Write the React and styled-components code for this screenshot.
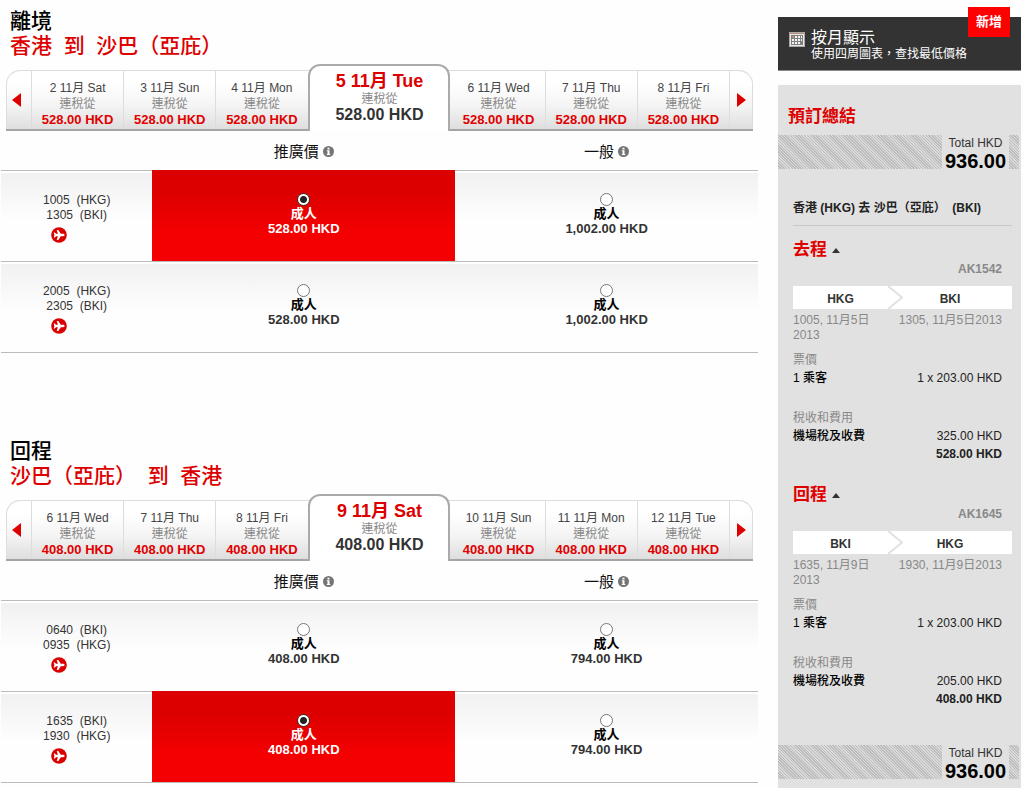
import React, { useState } from "react";
import styled, { createGlobalStyle, css } from "styled-components";

const GlobalStyle = createGlobalStyle`
  *, *::before, *::after { box-sizing: border-box; }
  body {
    margin: 0;
    background: #fefefe;
    color: #333;
    font: 12px/15px "Liberation Sans", "Noto Sans CJK TC", sans-serif;
  }
  h1, h2, h3, p, ul, dl, dd, dt { margin: 0; padding: 0; font-weight: normal; }
  button { font: inherit; color: inherit; background: none; border: 0; padding: 0; cursor: pointer; }
`;

const Page = styled.div`
  display: grid;
  grid-template-columns: minmax(0, 1fr) 243px;
  gap: 20px;
  min-height: 100vh;
  padding: 0 3px 0 1px;
`;

const Trip = styled.section`
  padding-top: 8px;
  & + & { margin-top: 77px; }
`;

const TripTitle = styled.h2`
  padding-left: 9px;
  font-size: 21px;
  line-height: 25px;
  font-weight: 500;
  color: #000;
`;

const TripRoute = styled.p`
  padding-left: 9px;
  font-size: 21px;
  line-height: 25px;
  font-weight: 500;
  color: #d00;
  white-space: pre-wrap;
`;

const DateStrip = styled.div`
  display: grid;
  grid-template-columns: 25px repeat(3, 1fr) 145px repeat(3, 1fr) 24px;
  height: 61px;
  margin: 12px 5px 0;
  border: 1px solid #ddd;
  border-width: 1px 0 2px;
  border-bottom-color: #a5a5a5;
  border-radius: 14px 14px 0 0;
  background: linear-gradient(#fff 20%, #f4f4f4 60%, #dedede);
  box-shadow: inset 1px 0 #ddd, inset -1px 0 #ddd;
`;

const Arrow = styled.button`
  display: grid;
  place-items: center;
  ${(p) => (p.$dir === "left" ? "padding-right: 4px;" : "border-left: 1px solid #ddd;")}
  & svg { display: block; }
`;

const DateTab = styled.button`
  display: flex;
  flex-direction: column;
  align-items: center;
  white-space: nowrap;
  ${(p) =>
    p.$active
      ? css`
          margin: -7px 2px -2px 1px;
          padding-top: 6px;
          background: #fff;
          border: 2px solid #aaa;
          border-bottom: 0;
          border-radius: 12px 12px 0 0;
        `
      : css`
          padding-top: 9px;
          border-left: ${p.$first ? 0 : 1}px solid #ddd;
        `}
`;

const TabDate = styled.span`
  font-size: ${(p) => (p.$active ? 18 : 12)}px;
  line-height: ${(p) => (p.$active ? 19 : 16)}px;
  font-weight: ${(p) => (p.$active ? 700 : 400)};
  color: ${(p) => (p.$active ? "#d00" : "#444")};
`;

const TabNote = styled.span`
  line-height: 16px;
  color: #888;
`;

const TabPrice = styled.strong`
  font-size: ${(p) => (p.$active ? 16 : 13)}px;
  line-height: 16px;
  color: ${(p) => (p.$active ? "#333" : "#e00000")};
`;

const FareTable = styled.table`
  width: 100%;
  table-layout: fixed;
  border-collapse: separate;
  border-spacing: 0;
  border-bottom: 1px solid #bbb;
`;

const HeadCell = styled.th`
  width: ${(p) => (p.$times ? "20%" : "40%")};
  height: 39px;
  padding: 2px 0 0;
  font-size: 15px;
  line-height: 20px;
  font-weight: 400;
  color: #111;
`;

const InfoButton = styled.button`
  margin-left: 4px;
  vertical-align: middle;
  line-height: 0;
  padding-bottom: 3px;
`;

const Cell = styled.td`
  height: 91px;
  padding: 22px 0 0;
  vertical-align: top;
  text-align: center;
  border-top: 1px solid ${(p) => (p.$selected ? "#dd0000" : "#bbb")};
  background: ${(p) =>
    p.$selected
      ? "linear-gradient(#dd0000 25%, #f40000 70%)"
      : "linear-gradient(#fff 2px, #f1f1f1 2px, #fefefe 55%)"};
  color: ${(p) => (p.$selected ? "#fff" : "#333")};
`;

const FlightTime = styled.p`
  white-space: pre-wrap;
`;

const PlaneBadge = styled.span`
  display: block;
  padding: 4px 36px 0 0;
  line-height: 0;
`;

const FareChoice = styled.label`
  display: flex;
  flex-direction: column;
  align-items: center;
  cursor: pointer;
`;

const Radio = styled.input`
  appearance: none;
  width: 13px;
  height: 13px;
  margin: 0;
  border: 1px solid #777;
  border-radius: 50%;
  background: #fff;
  &:checked {
    border-color: #333;
    background: radial-gradient(circle, #222 0 3px, #fff 4px);
  }
`;

const FareKind = styled.strong`
  font-size: 13px;
  color: ${(p) => (p.$selected ? "#fff" : "#000")};
`;

const FarePrice = styled.strong`
  font-size: 13px;
`;

const Sidebar = styled.aside`
  display: flex;
  flex-direction: column;
  padding-top: 17px;
`;

const MonthBanner = styled.a`
  position: relative;
  display: flex;
  gap: 6px;
  height: 54px;
  padding: 12px 11px 0;
  border-bottom: 1px solid #888;
  background: #333;
  color: #fff;
  text-decoration: none;
  & svg { flex: none; margin-top: 3px; }
`;

const BannerTitle = styled.span`
  display: block;
  font-size: 16px;
  line-height: 18px;
`;

const BannerNote = styled.span`
  display: block;
  line-height: 15px;
`;

const NewTag = styled.strong`
  position: absolute;
  top: -10px;
  right: 11px;
  width: 42px;
  font-size: 13px;
  line-height: 30px;
  text-align: center;
  background: #f00;
`;

const Summary = styled.section`
  flex: 1;
  margin-top: 14px;
  padding: 22px 0 9px;
  background: #e1e1e1;
`;

const SummaryTitle = styled.h2`
  padding: 0 10px;
  margin-bottom: 8px;
  font-size: 17px;
  line-height: 20px;
  font-weight: 700;
  color: #d00;
`;

const TotalBand = styled.div`
  display: flex;
  justify-content: flex-end;
  height: 34px;
  margin-right: 2px;
  padding-right: 10px;
  background: repeating-linear-gradient(45deg, #bcbcbc 0 1px, #dadada 1px 2px);
`;

const TotalBox = styled.p`
  width: 67px;
  background: #e1e1e1;
  text-align: center;
  line-height: 16px;
`;

const TotalValue = styled.strong`
  display: block;
  font-size: 20px;
  line-height: 21px;
  color: #000;
`;

const SummaryBody = styled.div`
  margin: 30px 9px 15px 15px;
`;

const RouteLine = styled.h3`
  padding-bottom: 8px;
  margin-bottom: 14px;
  border-bottom: 1px solid #c8c8c8;
  font-size: 12px;
  font-weight: 700;
  line-height: 18px;
  color: #222;
  white-space: pre;
`;

const Leg = styled.section`
  padding-bottom: 22px;
`;

const LegToggle = styled.button`
  display: flex;
  align-items: center;
  gap: 5px;
  font-size: 17px;
  line-height: 20px;
  font-weight: 700;
  color: #e00000;
`;

const FlightNo = styled.p`
  padding-right: 10px;
  margin-bottom: 8px;
  text-align: right;
  line-height: 18px;
  font-weight: 700;
  color: #888;
`;

const LegPath = styled.div`
  display: grid;
  grid-template-columns: 95px 16px 1fr;
  height: 23px;
  background: #fff;
  font-weight: 700;
  line-height: 26px;
  text-align: center;
  & svg { display: block; }
  & span:last-child { padding-right: 16px; }
`;

const LegTimes = styled.div`
  display: grid;
  grid-template-columns: 95px 1fr;
  margin: 4px 0 8px;
  padding-right: 10px;
  color: #888;
  & span:last-child { text-align: right; white-space: nowrap; }
`;

const Charges = styled.dl`
  padding-right: 10px;
  line-height: 18px;
  & + & { margin-top: 22px; }
`;

const ChargeHead = styled.dt`
  color: #888;
`;

const ChargeRow = styled.dd`
  display: flex;
  justify-content: ${(p) => (p.$sum ? "flex-end" : "space-between")};
  font-weight: ${(p) => (p.$sum ? 700 : 400)};
  color: #222;
`;

const ChargeName = styled.span`
  font-weight: 500;
  color: #000;
`;

function InfoIcon() {
  return (
    <svg width="11" height="11" viewBox="0 0 11 11" aria-hidden="true">
      <circle cx="5.5" cy="5.5" r="5.5" fill="#747474" />
      <path d="M4.5 1.8h2v1.6h-2zM3.8 4.3h2.700v3.600h.8v1H3.800v-1h.7V5.300h-.7z" fill="#fff" />
    </svg>
  );
}

function PlaneIcon() {
  return (
    <svg width="16" height="16" viewBox="0 0 16 16" aria-hidden="true">
      <circle cx="8" cy="8" r="7.8" fill="#d90000" />
      <path
        d="M13.600 8c0-.8-.8-1.200-1.800-1.200H9.800L7.300 3H5.700l1.200 3.800H4.900L3.900 5.400H2.700L3.400 8l-.7 2.600h1.200l1-1.400h2L5.700 13h1.600l2.500-3.800h2c1 0 1.800-.4 1.800-1.200z"
        fill="#fff"
      />
    </svg>
  );
}

function CalendarIcon() {
  return (
    <svg width="16" height="15" viewBox="0 0 16 15" aria-hidden="true">
      <rect x=".5" y=".5" width="15" height="14" fill="#e8e8e8" stroke="#aaa" />
      <path d="M1 1.500h14" stroke="#b98a70" />
      <path d="M2 3h12v10H2z" fill="#808080" />
      <path
        d="M6 4h2v2H6zM9 4h2v2H9zM12 4h1v2h-1zM3 7h2v2H3zM6 7h2v2H6zM9 7h2v2H9zM12 7h1v2h-1zM3 10h2v2H3zM6 10h2v2H6zM9 10h2v2H9z"
        fill="#f4f4f4"
      />
      <path d="M3 4h2v2H3z" fill="#b98a70" />
    </svg>
  );
}

function Triangle({ dir }) {
  return (
    <svg width="9" height="14" viewBox="0 0 9 14" aria-hidden="true">
      <path d={dir === "left" ? "M9 0v14L0 7z" : "M0 0v14l9-7z"} fill="#d00" />
    </svg>
  );
}

const trips = [
  {
    id: "out",
    title: "離境",
    route: "香港  到  沙巴（亞庇）",
    price: "528.00",
    days: ["2 11月 Sat", "3 11月 Sun", "4 11月 Mon", "5 11月 Tue", "6 11月 Wed", "7 11月 Thu", "8 11月 Fri"],
    flights: [
      { times: ["1005  (HKG)", "1305  (BKI)"], fares: ["528.00", "1,002.00"] },
      { times: ["2005  (HKG)", "2305  (BKI)"], fares: ["528.00", "1,002.00"] },
    ],
    initial: "0-0",
  },
  {
    id: "back",
    title: "回程",
    route: "沙巴（亞庇）  到  香港",
    price: "408.00",
    days: ["6 11月 Wed", "7 11月 Thu", "8 11月 Fri", "9 11月 Sat", "10 11月 Sun", "11 11月 Mon", "12 11月 Tue"],
    flights: [
      { times: ["0640  (BKI)", "0935  (HKG)"], fares: ["408.00", "794.00"] },
      { times: ["1635  (BKI)", "1930  (HKG)"], fares: ["408.00", "794.00"] },
    ],
    initial: "1-0",
  },
];

const legs = [
  { title: "去程", no: "AK1542", from: "HKG", to: "BKI", dep: "1005, 11月5日2013", arr: "1305, 11月5日2013", tax: "325.00", sum: "528.00" },
  { title: "回程", no: "AK1645", from: "BKI", to: "HKG", dep: "1635, 11月9日2013", arr: "1930, 11月9日2013", tax: "205.00", sum: "408.00" },
];

function TripPicker({ trip }) {
  const [picked, setPicked] = useState(trip.initial);
  return (
    <Trip>
      <TripTitle>{trip.title}</TripTitle>
      <TripRoute>{trip.route}</TripRoute>
      <DateStrip>
        <Arrow $dir="left" aria-label="上一頁"><Triangle dir="left" /></Arrow>
        {trip.days.map((day, i) => (
          <DateTab key={day} $active={i === 3} $first={i === 4}>
            <TabDate $active={i === 3}>{day}</TabDate>
            <TabNote>連稅從</TabNote>
            <TabPrice $active={i === 3}>{trip.price} HKD</TabPrice>
          </DateTab>
        ))}
        <Arrow $dir="right" aria-label="下一頁"><Triangle dir="right" /></Arrow>
      </DateStrip>
      <FareTable>
        <thead>
          <tr>
            <HeadCell $times />
            {["推廣價", "一般"].map((name) => (
              <HeadCell key={name} scope="col">
                {name}
                <InfoButton aria-label={name}><InfoIcon /></InfoButton>
              </HeadCell>
            ))}
          </tr>
        </thead>
        <tbody>
          {trip.flights.map((flight, row) => (
            <tr key={flight.times[0]}>
              <Cell>
                {flight.times.map((t) => <FlightTime key={t}>{t}</FlightTime>)}
                <PlaneBadge><PlaneIcon /></PlaneBadge>
              </Cell>
              {flight.fares.map((fare, col) => {
                const key = `${row}-${col}`;
                const on = picked === key;
                return (
                  <Cell key={key} $selected={on}>
                    <FareChoice>
                      <Radio type="radio" name={trip.id} checked={on} onChange={() => setPicked(key)} />
                      <FareKind $selected={on}>成人</FareKind>
                      <FarePrice>{fare} HKD</FarePrice>
                    </FareChoice>
                  </Cell>
                );
              })}
            </tr>
          ))}
        </tbody>
      </FareTable>
    </Trip>
  );
}

function Total() {
  return (
    <TotalBand>
      <TotalBox>
        Total HKD
        <TotalValue>936.00</TotalValue>
      </TotalBox>
    </TotalBand>
  );
}

function LegSummary({ leg }) {
  return (
    <Leg>
      <LegToggle aria-expanded="true">
        {leg.title}
        <svg width="8" height="5" viewBox="0 0 8 5" aria-hidden="true">
          <path d="M4 0l4 5H0z" fill="#333" />
        </svg>
      </LegToggle>
      <FlightNo>{leg.no}</FlightNo>
      <LegPath>
        <span>{leg.from}</span>
        <svg width="16" height="23" viewBox="0 0 16 23" aria-hidden="true">
          <path d="M0 0l14 11.500L0 23" fill="none" stroke="#e1e1e1" strokeWidth="2" />
        </svg>
        <span>{leg.to}</span>
      </LegPath>
      <LegTimes>
        <span>{leg.dep}</span>
        <span>{leg.arr}</span>
      </LegTimes>
      <Charges>
        <ChargeHead>票價</ChargeHead>
        <ChargeRow><ChargeName>1 乘客</ChargeName><span>1 x 203.00 HKD</span></ChargeRow>
      </Charges>
      <Charges>
        <ChargeHead>稅收和費用</ChargeHead>
        <ChargeRow><ChargeName>機場稅及收費</ChargeName><span>{leg.tax} HKD</span></ChargeRow>
        <ChargeRow $sum>{leg.sum} HKD</ChargeRow>
      </Charges>
    </Leg>
  );
}

export default function App() {
  return (
    <>
      <GlobalStyle />
      <Page>
        <main>
          {trips.map((trip) => <TripPicker key={trip.id} trip={trip} />)}
        </main>
        <Sidebar>
          <MonthBanner href="#month">
            <CalendarIcon />
            <span>
              <BannerTitle>按月顯示</BannerTitle>
              <BannerNote>使用四周圖表，查找最低價格</BannerNote>
            </span>
            <NewTag>新增</NewTag>
          </MonthBanner>
          <Summary>
            <SummaryTitle>預訂總結</SummaryTitle>
            <Total />
            <SummaryBody>
              <RouteLine>{"香港 (HKG) 去 沙巴（亞庇）  (BKI)"}</RouteLine>
              {legs.map((leg) => <LegSummary key={leg.no} leg={leg} />)}
            </SummaryBody>
            <Total />
          </Summary>
        </Sidebar>
      </Page>
    </>
  );
}
